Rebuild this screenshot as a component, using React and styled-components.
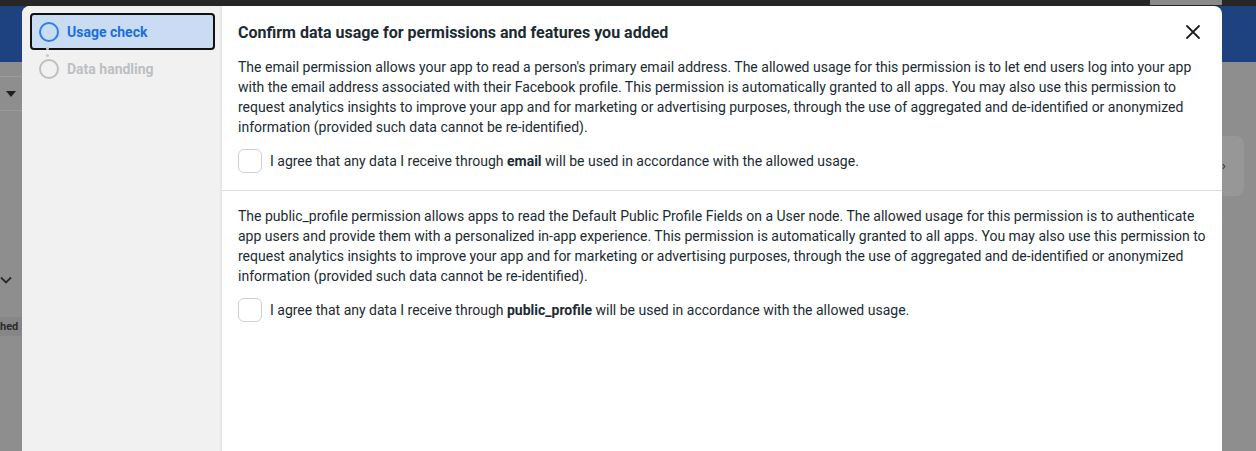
import React from 'react'
import styled, { createGlobalStyle } from 'styled-components'

const Global = createGlobalStyle`
    html, body { margin: 0; padding: 0; }
    body {
        font-family: Roboto, "Liberation Sans", Arial, sans-serif;
        background: #8e8e8e;
        overflow: hidden;
    }
`

const Page = styled.div`
    position: relative;
    width: 1256px;
    height: 451px;
    overflow: hidden;
    background: #8e8e8e;
`
const TopBar = styled.div`
    height: 6px;
    background: #262626;
    display: flex;
    justify-content: flex-end;
    padding-right: 34px;
`
const TopButton = styled.div`
    width: 72px;
    height: 5px;
    background: #8a8a8a;
`
const BlueBar = styled.div`
    height: 56px;
    background: #1e427f;
`
const Body = styled.div`
    display: flex;
    justify-content: space-between;
`
const LeftRail = styled.div`
    width: 22px;
    display: flex;
    flex-direction: column;
`
const RailRow = styled.div`
    height: 33px;
    margin-top: 14px;
    border-top: 1px solid #9c9c9c;
    border-bottom: 1px solid #9c9c9c;
    display: flex;
    align-items: center;
    justify-content: flex-end;
    padding-right: 6px;
`
const Triangle = styled.div`
    width: 0;
    height: 0;
    border-left: 5px solid transparent;
    border-right: 5px solid transparent;
    border-top: 6px solid #1f1f1f;
`
const Chevron = styled.div`
    margin-top: 158px;
    color: #2a2a2a;
    height: 16px;
`
const Badge = styled.div`
    margin-top: 32px;
    margin-left: -4px;
    background: #868686;
    border-radius: 3px;
    font-size: 11px;
    font-weight: 700;
    color: #2b2b2b;
    padding: 3px 2px 3px 4px;
`
const RightRail = styled.div`
    width: 34px;
    padding-top: 74px;
`
const SideCard = styled.div`
    width: 22px;
    height: 60px;
    background: #979797;
    border-radius: 0 8px 8px 0;
    display: flex;
    align-items: center;
    color: #222;
    font-size: 12px;
`

const Modal = styled.div`
    position: absolute;
    top: 6px;
    left: 22px;
    width: 1200px;
    height: 470px;
    background: #fff;
    border-radius: 8px 8px 0 0;
    overflow: hidden;
    display: grid;
    grid-template-columns: 200px 1fr;
`
const Sidebar = styled.div`
    background: #f1f1f1;
    box-shadow: inset -3px 0 3px -2px rgba(0,0,0,0.08);
    padding: 7px 7px 0 8px;
`
const Step = styled.div`
    height: 37px;
    box-sizing: border-box;
    display: flex;
    align-items: center;
    gap: 8px;
    padding-left: 7px;
    border-radius: 4px;
    border: 2px solid ${p => p.$active ? '#111' : 'transparent'};
    background: ${p => p.$active ? '#c9dcf3' : 'transparent'};
    color: ${p => p.$active ? '#1b6fdc' : '#bcc0c4'};
    font-size: 14px;
    font-weight: 700;
`
const Ring = styled.span`
    width: 20px;
    height: 20px;
    box-sizing: border-box;
    border-radius: 50%;
    border: 2px solid ${p => p.$active ? '#2d7ff0' : '#bcc0c4'};
    flex-shrink: 0;
`
const Dots = styled.div`
    height: 0;
    position: relative;
`
const Dot = styled.span`
    position: absolute;
    left: 16px;
    top: ${p => p.$top}px;
    width: 3px;
    height: 3px;
    border-radius: 50%;
    background: #c6cad0;
`

const Main = styled.div`
    display: flex;
    flex-direction: column;
`
const Header = styled.div`
    display: flex;
    align-items: center;
    justify-content: space-between;
    padding: 14px 20px 0 16px;
    height: 24px;
`
const Title = styled.h2`
    margin: 0;
    font-size: 16px;
    font-weight: 700;
    color: #1c2b33;
`
const Close = styled.button`
    border: 0;
    background: none;
    padding: 0;
    width: 18px;
    height: 18px;
    display: flex;
    cursor: pointer;
`
const Section = styled.div`
    padding: ${p => p.$first ? '13px' : '15px'} 16px 17px;
    border-bottom: ${p => p.$last ? 'none' : '1px solid #dadde1'};
`
const Text = styled.p`
    margin: 0;
    font-size: 14px;
    line-height: 20px;
    color: #1c2b33;
`
const Agree = styled.label`
    display: flex;
    align-items: center;
    gap: 8px;
    margin-top: 12px;
    font-size: 14px;
    color: #1c2b33;
`
const Box = styled.span`
    width: 24px;
    height: 24px;
    box-sizing: border-box;
    border: 1px solid #ccd0d5;
    border-radius: 6px;
    background: #fff;
`

const sections = [
    {
        perm: 'email',
        text: "The email permission allows your app to read a person's primary email address. The allowed usage for this permission is to let end users log into your app with the email address associated with their Facebook profile. This permission is automatically granted to all apps. You may also use this permission to request analytics insights to improve your app and for marketing or advertising purposes, through the use of aggregated and de-identified or anonymized information (provided such data cannot be re-identified).",
    },
    {
        perm: 'public_profile',
        text: 'The public_profile permission allows apps to read the Default Public Profile Fields on a User node. The allowed usage for this permission is to authenticate app users and provide them with a personalized in-app experience. This permission is automatically granted to all apps. You may also use this permission to request analytics insights to improve your app and for marketing or advertising purposes, through the use of aggregated and de-identified or anonymized information (provided such data cannot be re-identified).',
    },
]

const App = () => {
    return (
        <Page>
            <Global />
            <TopBar><TopButton /></TopBar>
            <BlueBar />
            <Body>
                <LeftRail>
                    <RailRow><Triangle /></RailRow>
                    <Chevron>
                        <svg width="12" height="8" viewBox="0 0 12 8">
                            <path d="M1 1.5l5 5 5-5" fill="none" stroke="#2a2a2a" strokeWidth="1.8" />
                        </svg>
                    </Chevron>
                    <Badge>hed</Badge>
                </LeftRail>
                <RightRail>
                    <SideCard>›</SideCard>
                </RightRail>
            </Body>

            <Modal>
                <Sidebar>
                    <Step $active><Ring $active />Usage check</Step>
                    <Dots>
                        <Dot $top={-3} />
                        <Dot $top={4} />
                    </Dots>
                    <Step><Ring />Data handling</Step>
                </Sidebar>
                <Main>
                    <Header>
                        <Title>Confirm data usage for permissions and features you added</Title>
                        <Close aria-label="Close">
                            <svg width="18" height="18" viewBox="0 0 18 18">
                                <path d="M3 3l12 12M15 3L3 15" stroke="#1c1e21" strokeWidth="1.8" strokeLinecap="round" />
                            </svg>
                        </Close>
                    </Header>
                    {sections.map((s, i) => (
                        <Section key={s.perm} $first={i === 0} $last={i === sections.length - 1}>
                            <Text>{s.text}</Text>
                            <Agree>
                                <Box />
                                <span>I agree that any data I receive through <b>{s.perm}</b> will be used in accordance with the allowed usage.</span>
                            </Agree>
                        </Section>
                    ))}
                </Main>
            </Modal>
        </Page>
    )
}

export default App
